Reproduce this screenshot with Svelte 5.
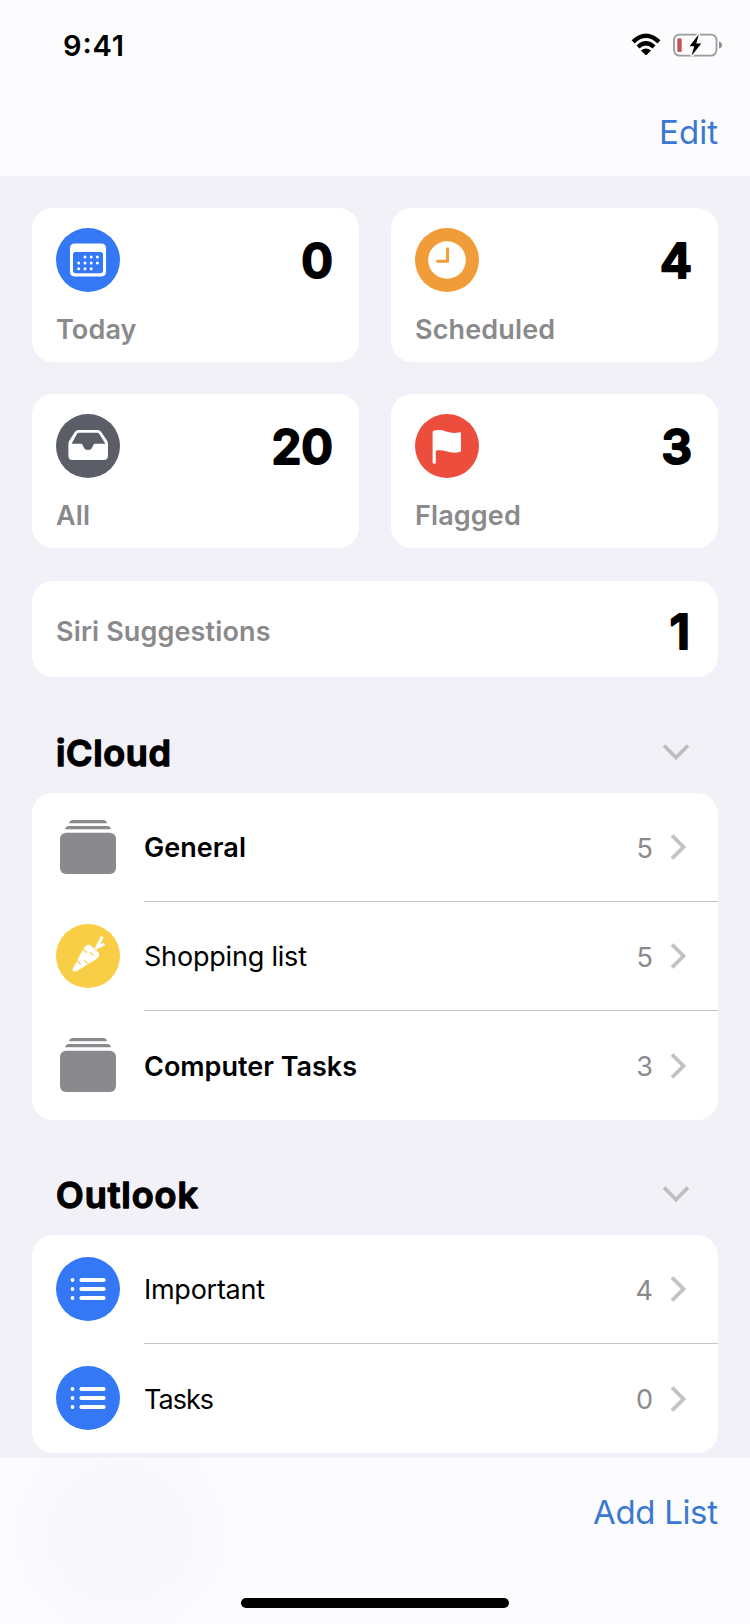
<script>
  const tiles = [
    { icon: 'calendar', label: 'Today', count: '0', color: '#3478f6' },
    { icon: 'clock', label: 'Scheduled', count: '4', color: '#f09c38' },
    { icon: 'tray', label: 'All', count: '20', color: '#5b5e67' },
    { icon: 'flag', label: 'Flagged', count: '3', color: '#ec4d3d' }
  ];
  const groups = [
    {
      title: 'iCloud',
      width: 115,
      rows: [
        { icon: 'stack', name: 'General', count: 5, bold: true, width: 102 },
        { icon: 'carrot', name: 'Shopping list', count: 5, width: 163 },
        { icon: 'stack', name: 'Computer Tasks', count: 3, bold: true, width: 213 }
      ]
    },
    {
      title: 'Outlook',
      width: 142,
      rows: [
        { icon: 'bullets', name: 'Important', count: 4, width: 121 },
        { icon: 'bullets', name: 'Tasks', count: 0, width: 70 }
      ]
    }
  ];
</script>

{#snippet glyph(name, color)}
  <svg class="icon" viewBox="0 0 64 64">
    {#if name === 'stack'}
      <g fill="#8a8a8e">
        <path d="M13 8.200Q14 5 17 5H47.500Q50 5 51 8.200Z" />
        <path d="M9 14.300Q10 11 13 11H51.500Q54 11 55 14.300Z" />
        <rect x="4" y="17.700" width="56" height="41.300" rx="6" />
      </g>
    {:else}
      <circle cx="32" cy="32" r="32" fill={color} />
      {#if name === 'calendar'}
        <path fill="#fff" fill-rule="evenodd" d="M19 15.500H45Q50 15.500 50 20.500V43.500Q50 48.500 45 48.500H19Q14 48.500 14 43.500V20.500Q14 15.500 19 15.500ZM19.500 24Q17 24 17 26.500V42.500Q17 45.200 19.700 45.200H44.300Q47 45.200 47 42.500V26.500Q47 24 44.500 24Z" />
        <g fill="#fff">
          {#each [[29, 29], [35.2, 29], [41.4, 29], [22.7, 35], [29, 35], [35.2, 35], [41.4, 35], [22.7, 40.7], [29, 40.7], [35.2, 40.7]] as [x, y]}
            <circle cx={x} cy={y} r="1.500" />
          {/each}
        </g>
      {:else if name === 'clock'}
        <circle cx="32" cy="32" r="18.800" fill="#fff" />
        <path d="M32.600 20.800V33.200H22.500" fill="none" stroke={color} stroke-width="3" stroke-linecap="round" stroke-linejoin="round" />
      {:else if name === 'tray'}
        <path fill="#fff" fill-rule="evenodd" d="M22.500 16H41.500Q43.800 16 45.100 17.800L51 26.500Q52 28 52 30V41.500Q52 46 47.500 46H16.500Q12.400 46 12.400 41.500V30Q12.400 28 13.400 26.500L19 17.800Q20.300 16 22.500 16ZM22.800 18.700Q21.700 18.700 21 19.700L15.600 29.700H25Q26.300 29.700 27 31.500Q28.300 36 32 36Q35.700 36 37 31.500Q37.700 29.700 39 29.700H49.300L43.200 19.700Q42.500 18.700 41.400 18.700Z" />
      {:else if name === 'flag'}
        <path fill="#fff" d="M17.600 18.300Q17.600 17.200 18.700 16.800C22 15.600 27 16 31 17.500C35.500 19 40 19.500 44.500 18.300Q46 18 46 19.500V36.500Q46 37.700 44.800 38C39.500 39.300 35.500 38.600 31 37.300C27.500 36.200 24 35.900 20.800 36.700V48.200A1.600 1.600 0 0 1 17.600 48.200Z" />
      {:else if name === 'carrot'}
        <path fill="#fff" d="M27.500 24.500Q31.500 18.500 35.500 22L42 28Q45 31.500 40.500 35L20.500 47.300Q17.500 48.500 16.500 46.800Q16.200 45.500 17 44.300Z" />
        <path d="M40.600 24L45.800 13.800M41.300 23L47.300 20.600" fill="none" stroke="#fff" stroke-width="3" stroke-linecap="round" />
        <path d="M27.200 25.200L30.400 28.400M37 31.200L34.400 28.600M20.600 36.800L24.300 39.800M31.300 39.300L28.600 36.600" fill="none" stroke={color} stroke-width="1.200" stroke-linecap="round" />
      {:else}
        <g fill="#fff">
          {#each [23, 32, 41] as y}
            <circle cx="16.500" cy={y} r="1.900" />
            <rect x="23.500" y={y - 2} width="26" height="4" rx="1.800" />
          {/each}
        </g>
      {/if}
    {/if}
  </svg>
{/snippet}

{#snippet total(value)}
  <svg class="total" viewBox="0 0 80 50">
    <text x="78" y="43" text-anchor="end">{value}</text>
  </svg>
{/snippet}

{#snippet label(text, width, kind)}
  <svg class="line {kind}" width={width + 4} height="40" viewBox="0 0 {width + 4} 40">
    <text x="0" y="30" textLength={width} lengthAdjust="spacing">{text}</text>
  </svg>
{/snippet}

<div class="screen">
  <header>
    <div class="status">
      {@render label('9:41', 61, 'time')}
      <div class="indicators">
        <svg width="30" height="24" viewBox="0 0 30 24">
          <g fill="none" stroke="#000" stroke-width="4.400">
            <path d="M2.100 8.800Q15 -3.200 27.900 8.800" />
            <path d="M7 14Q15 6.600 23 14" />
          </g>
          <path d="M10 17.600Q15 13.300 20 17.600L15.800 21.700Q15 22.400 14.200 21.700Z" />
        </svg>
        <svg width="50" height="24" viewBox="0 0 50 24">
          <rect x="1" y="1.600" width="42.500" height="21" rx="5.500" fill="none" stroke="#9b9b9d" stroke-width="1.800" />
          <path d="M46 8.500Q49 9.500 49 12Q49 14.500 46 15.500Z" fill="#8c8c8e" />
          <rect x="4.300" y="5.300" width="4.400" height="13.600" rx="1.500" fill="#c45555" />
          <path d="M25.800 1.200L16.500 13.200H21.200L18.600 22.800L28.300 10.600H23.300Z" fill="#000" stroke="#fcfcfe" stroke-width="3" paint-order="stroke" />
        </svg>
      </div>
    </div>
    <button class="edit">{@render label('Edit', 59, 'action')}</button>
  </header>

  <main>
    <div class="tiles">
      {#each tiles as tile}
        <section class="tile">
          <div class="top">
            {@render glyph(tile.icon, tile.color)}
            {@render total(tile.count)}
          </div>
          <span class="caption">{tile.label}</span>
        </section>
      {/each}
    </div>

    <section class="siri">
      <span class="caption">Siri Suggestions</span>
      {@render total('1')}
    </section>

    {#each groups as group}
      <section class="group">
        <div class="heading">
          {@render label(group.title, group.width, 'title')}
          <svg class="fold" width="28" height="20" viewBox="0 0 28 20">
            <path d="M2 3.500L14 15.500L26 3.500" fill="none" stroke="#bdbdc2" stroke-width="3.800" />
          </svg>
        </div>
        <div class="list">
          {#each group.rows as row}
            <div class="row">
              {@render glyph(row.icon, row.icon === 'carrot' ? '#f8ce46' : '#3478f6')}
              <div class="body">
                {@render label(row.name, row.width, row.bold ? 'name strong' : 'name')}
                <span class="count">{row.count}</span>
                <svg width="20" height="28" viewBox="0 0 20 28">
                  <path d="M3 2.500L14.500 14L3 25.500" fill="none" stroke="#c2c2c6" stroke-width="3.800" />
                </svg>
              </div>
            </div>
          {/each}
        </div>
      </section>
    {/each}
  </main>

  <footer>
    <button>{@render label('Add List', 125, 'action')}</button>
    <div class="home"></div>
  </footer>
</div>

<style>
  :global(body) {
    margin: 0;
    background: #f2f1f7;
  }
  .screen {
    width: 750px;
    height: 1624px;
    display: flex;
    flex-direction: column;
    overflow: hidden;
    background: #f2f1f7;
    font-family: Inter, 'Liberation Sans', sans-serif;
    color: #000;
  }
  svg {
    display: block;
    flex: none;
  }
  header {
    box-sizing: border-box;
    flex: none;
    height: 176px;
    padding: 26px 28px 0 63px;
    background: #fcfcfe;
  }
  .status {
    height: 40px;
    margin-right: -1px;
    display: flex;
    justify-content: space-between;
    align-items: flex-start;
  }
  .indicators {
    display: flex;
    gap: 12px;
    padding-top: 7px;
  }
  button {
    display: block;
    margin: 0 0 0 auto;
    padding: 0;
    border: 0;
    background: none;
    font: inherit;
  }
  .edit {
    margin-top: 48px;
  }
  .line {
    overflow: visible;
  }
  .time text {
    font-size: 29px;
    font-weight: 600;
  }
  .action text {
    font-size: 33px;
    fill: #3b78d2;
  }
  .name text {
    font-size: 27px;
  }
  .strong text {
    font-weight: 600;
  }
  .title text {
    font-size: 36px;
    font-weight: 600;
    stroke: #000;
    stroke-width: 1.400px;
    stroke-linejoin: round;
  }
  main {
    flex: none;
    height: 1282px;
    box-sizing: border-box;
    padding: 32px 32px 0;
  }
  .tiles {
    display: grid;
    grid-template-columns: 1fr 1fr;
    gap: 32px;
  }
  .tile,
  .siri,
  .list {
    background: #fff;
    border-radius: 21px;
  }
  .tile {
    box-sizing: border-box;
    height: 154px;
    padding: 20px 24px 0;
  }
  .top {
    display: flex;
    justify-content: space-between;
    align-items: flex-start;
  }
  .icon {
    width: 64px;
    height: 64px;
  }
  .total {
    width: 80px;
    height: 50px;
    margin-top: 7px;
    overflow: visible;
  }
  .total text {
    font-size: 48px;
    font-weight: 600;
    stroke: #000;
    stroke-width: 2.200px;
    stroke-linejoin: round;
  }
  .caption {
    display: block;
    margin-top: 21px;
    font-size: 27px;
    line-height: 34px;
    font-weight: 600;
    letter-spacing: 0.130px;
    color: #8a8a8c;
  }
  .siri {
    height: 96px;
    margin-top: 33px;
    padding: 0 26px 0 24px;
    display: flex;
    align-items: center;
    justify-content: space-between;
  }
  .siri .caption {
    margin-top: 5px;
  }
  .siri .total {
    margin-top: 3px;
  }
  .heading {
    box-sizing: border-box;
    height: 116px;
    padding: 59px 28px 0 24px;
    display: flex;
    justify-content: space-between;
    align-items: flex-start;
  }
  .group + .group .heading {
    height: 115px;
    padding-top: 58px;
  }
  .fold {
    margin-top: 6px;
  }
  .list {
    overflow: hidden;
  }
  .row {
    height: 109px;
    padding-left: 24px;
    display: flex;
    align-items: flex-start;
    gap: 24px;
  }
  .row .icon {
    margin-top: 22px;
  }
  .body {
    box-sizing: border-box;
    flex: 1;
    height: 109px;
    display: flex;
    align-items: center;
    padding-right: 29px;
  }
  .row:not(:last-child) .body {
    border-bottom: 1px solid #c6c6c8;
  }
  .count {
    margin: 2px 16px 0 auto;
    font-size: 27px;
    color: #8a8a8c;
  }
  footer {
    flex: 1;
    padding: 36px 28px 0;
    background: radial-gradient(ellipse 125px 120px at 120px 75px, #f8f8fa 0 45%, #fcfcfe 100%) #fcfcfe;
  }
  .home {
    width: 268px;
    height: 10px;
    margin: 64px auto 0;
    border-radius: 5px;
    background: #000;
  }
</style>
